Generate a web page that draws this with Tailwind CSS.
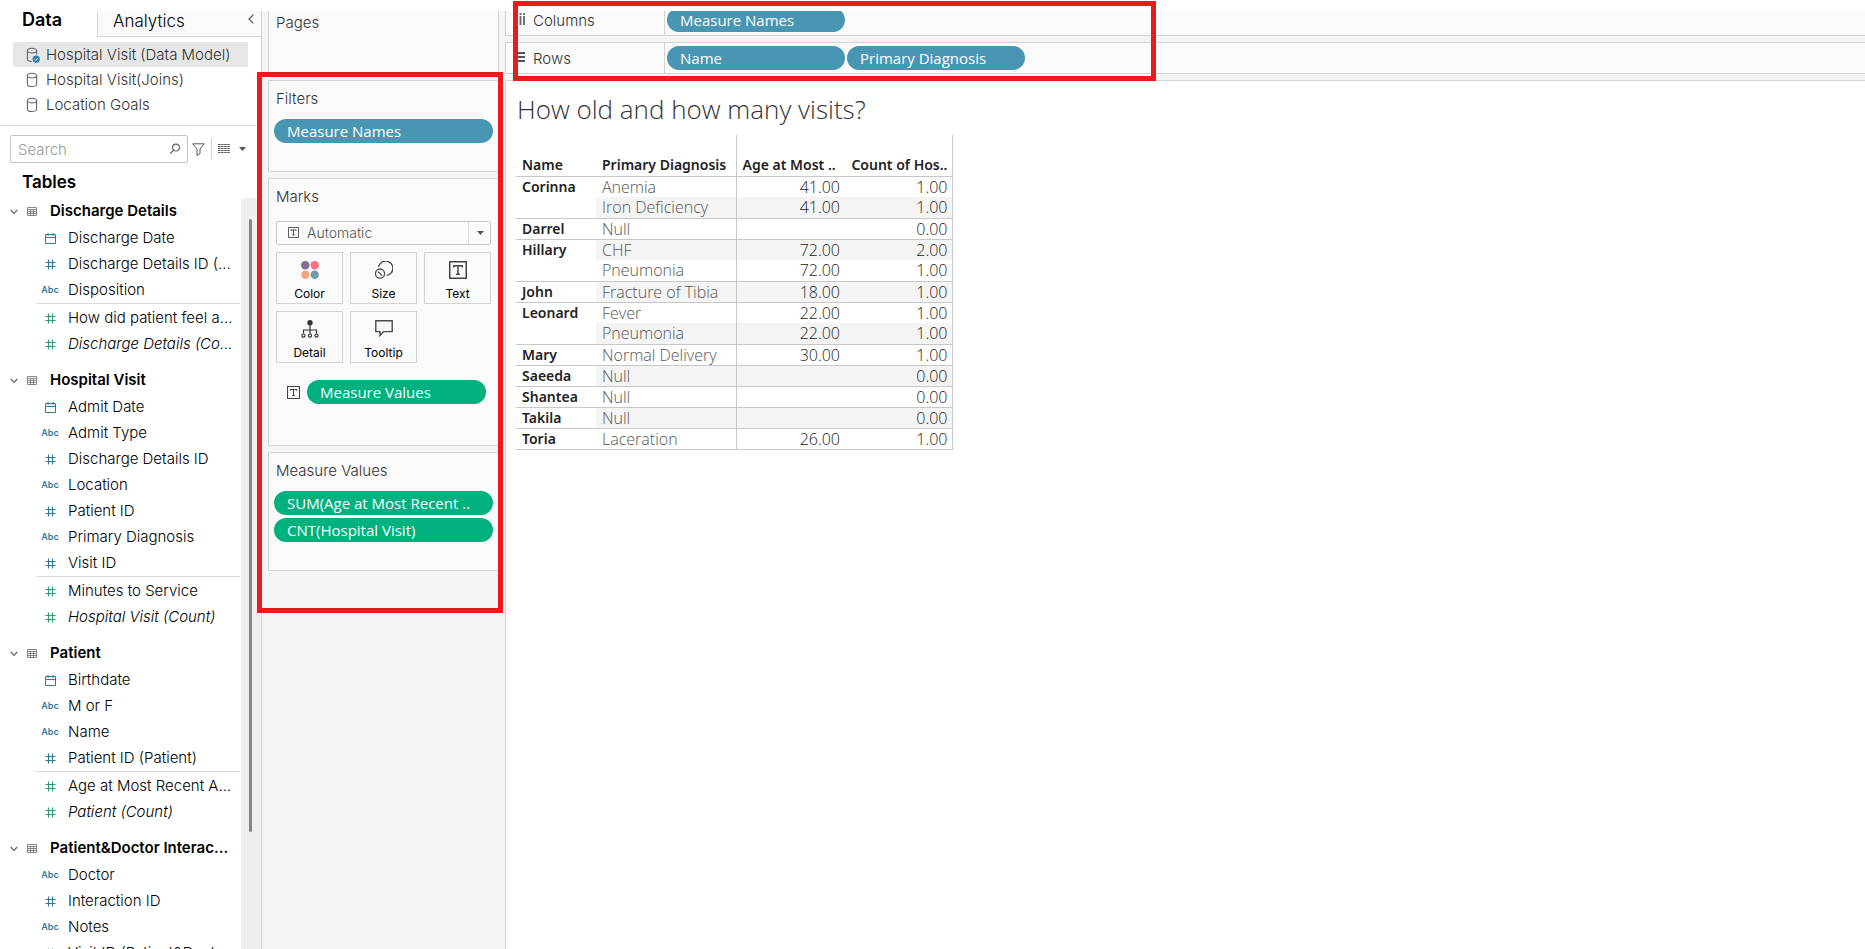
<!DOCTYPE html>
<html lang="en">
<head>
<meta charset="utf-8">
<title>Hospital Visit workbook</title>
<script src="https://cdn.jsdelivr.net/npm/@tailwindcss/browser@4"></script>
</head>
<body class="bg-white font-['Inter',sans-serif] text-[15px] font-light text-[#333]">

<svg class="hidden" aria-hidden="true">
  <symbol id="db" viewBox="0 0 14 16"><g fill="none" stroke="#666" stroke-width="1.1"><ellipse cx="6" cy="3.6" rx="4.6" ry="2.4"/><path d="M1.4 3.6v8.6c0 1.3 2 2.3 4.6 2.3s4.6-1 4.6-2.3V3.6"/></g></symbol>
  <symbol id="db-on" viewBox="0 0 14 16"><g fill="none" stroke="#666" stroke-width="1.1"><ellipse cx="6" cy="3.6" rx="4.6" ry="2.4"/><path d="M1.4 3.6v8.6c0 1.3 1.8 2.2 4.2 2.3M10.6 3.6v4"/></g><circle cx="10.2" cy="12.2" r="3.6" fill="#2e7da3"/><path d="M8.4 12.2l1.3 1.3 2.4-2.6" fill="none" stroke="#fff"/></symbol>
  <symbol id="chev" viewBox="0 0 8 8"><path d="M.8 2L4 5.4 7.2 2" fill="none" stroke="#666" stroke-width="1.3"/></symbol>
  <symbol id="table" viewBox="0 0 10 9"><path d="M.5.5h9v8h-9zM.5 2.5h9M.5 4.5h9M.5 6.5h9M3.5 2.5v6M6.5 2.5v6" fill="none" stroke="#6b6b6b" stroke-width=".8"/></symbol>
  <symbol id="cal" viewBox="0 0 11 11"><path d="M.5 1.5h10v9H.5zM.5 4.5h10M3 0v3M8 0v3" fill="none" stroke="currentColor"/></symbol>
  <symbol id="hash" viewBox="0 0 11 11"><path d="M3.5.5v10M7.5.5v10M.5 3.5h10M.5 7.5h10" fill="none" stroke="currentColor" stroke-width="1.1"/></symbol>
  <symbol id="tbox" viewBox="0 0 17 17"><path d="M.7.7h15.6v15.6H.7zM4.5 6.2V4.5h8v1.7M8.5 4.5v8M6.7 12.5h3.6" fill="none" stroke="#444" stroke-width="1.4"/></symbol>
</svg>

<div class="flex h-screen overflow-hidden pt-[11px]">

  <!-- Data pane -->
  <aside class="flex w-[262px] shrink-0 flex-col border-r border-[#d4d4d4]">
    <div class="flex h-[26px] shrink-0" role="tablist">
      <button role="tab" aria-selected="true" class="flex w-[97px] pl-[22px] text-lg font-semibold leading-[18px] text-black">Data</button>
      <div class="flex grow items-start justify-between border-b border-l border-[#d4d4d4] bg-[#fafafa]">
        <button role="tab" aria-selected="false" class="pl-[15px] text-[17px] font-light leading-5 text-black">Analytics</button>
        <button aria-label="Collapse pane" class="px-[7px] pt-[3px]"><svg class="h-[10px] w-[6px]" viewBox="0 0 6 10"><path d="M5.3.7L1 5l4.3 4.3" fill="none" stroke="#555" stroke-width="1.2"/></svg></button>
      </div>
    </div>

    <ul class="mt-[5px] mb-2 ml-[13px] mr-[13px] leading-[25px]">
      <li class="flex h-[25px] items-center gap-[6px] bg-[#e6e6e6] pl-[13px]"><svg class="h-4 w-[14px]"><use href="#db-on"/></svg>Hospital Visit (Data Model)</li>
      <li class="flex h-[25px] items-center gap-[6px] pl-[13px]"><svg class="h-4 w-[14px]"><use href="#db"/></svg>Hospital Visit(Joins)</li>
      <li class="flex h-[25px] items-center gap-[6px] pl-[13px]"><svg class="h-4 w-[14px]"><use href="#db"/></svg>Location Goals</li>
    </ul>

    <div class="flex h-[48px] shrink-0 items-center border-t border-[#dcdcdc] pb-px pl-[10px]">
      <label class="relative block w-[178px]">
        <input type="search" aria-label="Search fields" placeholder="Search" class="block h-7 w-full rounded-xs border border-[#c4c4c4] pl-[7px] font-light placeholder:text-[#999]">
        <svg class="absolute right-[7px] top-2 h-3 w-3" viewBox="0 0 12 12"><circle cx="7" cy="4.6" r="3.4" fill="none" stroke="#666" stroke-width="1.2"/><path d="M4.6 7L1.2 10.6" stroke="#666" stroke-width="1.2"/></svg>
      </label>
      <button aria-label="Filter fields" class="ml-[4px]"><svg class="h-[13px] w-[13px]" viewBox="0 0 13 13"><path d="M.7.8h11.6L8 6v4.6L5 12.4V6z" fill="none" stroke="#555"/></svg></button>
      <span class="mx-[6px] h-[22px] w-px bg-[#d4d4d4]"></span>
      <button aria-label="View as" class="flex items-center gap-[9px]"><svg class="h-[10px] w-[12px]" viewBox="0 0 12 10"><path d="M0 .5h12M0 2.5h12M0 4.5h12M0 6.500h12M0 8.500h12" stroke="#555" stroke-dasharray="2.500 .6"/></svg><svg class="h-1 w-[7px]" viewBox="0 0 7 4"><path d="M0 0h7L3.500 4z" fill="#555"/></svg></button>
    </div>

    <h2 class="h-[25px] shrink-0 pl-[22px] text-[17px] font-semibold leading-[18px] text-black">Tables</h2>

    <div class="flex min-h-0 grow">
      <div id="tree" class="w-[241px] shrink-0 overflow-hidden text-black"></div>
      <div class="grow bg-[#efefef] pl-2 pt-[21px]"><div class="h-[613px] w-[3px] rounded-full bg-[#858585]"></div></div>
    </div>
  </aside>

  <!-- Cards -->
  <section class="relative flex w-[243px] shrink-0 flex-col gap-[6px] bg-[#f4f4f4] pl-[6px] pr-[6px]">
    <div class="h-[63px] border border-t-0 border-[#d4d4d4] bg-[#fafafa] pl-[7px]"><h3 class="leading-[24px]">Pages</h3></div>
    <div class="h-[92px] border border-[#d4d4d4] bg-[#fafafa] px-[5px] pt-[7px]">
      <h3 class="pl-[2px] leading-[22px]">Filters</h3>
      <button class="mt-[9px] block h-6 w-full rounded-full bg-[#4996b2] pl-[13px] text-left font-['Open_Sans',sans-serif] font-medium text-white">Measure Names</button>
    </div>
    <div class="h-[268px] border border-[#d4d4d4] bg-[#fafafa] px-[7px] pt-[7px]">
      <h3 class="leading-[22px]">Marks</h3>
      <div class="relative mt-[13px]">
        <select aria-label="Mark type" class="block h-6 w-full appearance-none rounded-xs border border-[#c8c8c8] pb-[2px] pl-[30px] text-[14px] font-light text-[#555]"><option>Automatic</option></select>
        <svg class="pointer-events-none absolute left-[12px] top-[6px] h-[11px] w-[11px]" viewBox="0 0 17 17"><use href="#tbox"/></svg>
        <span class="pointer-events-none absolute right-0 top-px flex h-[22px] w-[23px] items-center justify-center border-l border-[#ddd]"><svg class="h-1 w-[7px]" viewBox="0 0 7 4"><path d="M0 0h7L3.500 4z" fill="#555"/></svg></span>
      </div>
      <div class="mt-[7px] grid grid-cols-3 gap-[7px] text-[12px] font-normal text-black">
        <button class="flex h-[52px] flex-col items-center border border-[#d4d4d4] pt-2"><svg class="h-[18px] w-[18px]" viewBox="0 0 18 18"><circle cx="4.300" cy="4.300" r="4.200" fill="#836c96"/><circle cx="13.700" cy="4.300" r="4.200" fill="#fb7183"/><circle cx="4.300" cy="13.700" r="4.200" fill="#f4a77c"/><circle cx="13.700" cy="13.700" r="4.200" fill="#6d9ba7"/></svg><span class="mt-[6px] leading-[18px]">Color</span></button>
        <button class="flex h-[52px] flex-col items-center border border-[#d4d4d4] pt-2"><svg class="h-[18px] w-[18px]" viewBox="0 0 18 18" fill="none" stroke="#4a4a4a" stroke-width="1.300"><circle cx="5" cy="12.600" r="4.600"/><path d="M3 10.600l4 4M3.600 6A7.200 7.200 0 1 1 11.800 14.400"/></svg><span class="mt-[6px] leading-[18px]">Size</span></button>
        <button class="flex h-[52px] flex-col items-center border border-[#d4d4d4] pt-2"><svg class="h-[18px] w-[18px]" viewBox="0 0 17 17"><use href="#tbox"/></svg><span class="mt-[6px] leading-[18px]">Text</span></button>
        <button class="flex h-[52px] flex-col items-center border border-[#d4d4d4] pt-2"><svg class="h-[18px] w-[18px]" viewBox="0 0 18 18" fill="none" stroke="#333" stroke-width="1.200"><circle cx="9" cy="2.800" r="2.700" fill="#333" stroke="none"/><path d="M9 5v8.500M2.500 13.500V10h13v3.500"/><circle cx="2.500" cy="15.600" r="1.600"/><circle cx="9" cy="15.600" r="1.600"/><circle cx="15.500" cy="15.600" r="1.600"/></svg><span class="mt-[6px] leading-[18px]">Detail</span></button>
        <button class="flex h-[52px] flex-col items-center border border-[#d4d4d4] pt-2"><svg class="h-[18px] w-[18px]" viewBox="0 0 18 18"><path d="M.8.800h16.400v10.800H8.500L5 15.400v-3.800H.8z" fill="none" stroke="#4a4a4a" stroke-width="1.400"/></svg><span class="mt-[6px] leading-[18px]">Tooltip</span></button>
      </div>
      <div class="mt-[17px] flex items-center gap-[7px] pl-[11px] pr-[5px]">
        <svg class="h-[13px] w-[13px]" viewBox="0 0 17 17"><use href="#tbox"/></svg>
        <button class="h-6 grow rounded-full bg-[#00b180] pl-[13px] text-left font-['Open_Sans',sans-serif] font-medium text-white">Measure Values</button>
      </div>
    </div>
    <div class="h-[119px] border border-[#d4d4d4] bg-[#fafafa] px-[5px] pt-[7px]">
      <h3 class="pl-[2px] leading-[22px]">Measure Values</h3>
      <div class="mt-[9px] flex flex-col gap-[3px] text-white">
        <button class="h-6 rounded-full bg-[#00b180] pl-[13px] text-left font-['Open_Sans',sans-serif] font-medium">SUM(Age at Most Recent ..</button>
        <button class="h-6 rounded-full bg-[#00b180] pl-[13px] text-left font-['Open_Sans',sans-serif] font-medium">CNT(Hospital Visit)</button>
      </div>
    </div>
    <div class="pointer-events-none absolute -left-[5px] right-[2px] top-[61px] h-[541px] border-[5px] border-[#e81c1c]"></div>
  </section>

  <!-- Shelves and view -->
  <main class="relative flex min-w-0 grow flex-col gap-[6px] bg-[#f4f4f4]">
    <div class="flex h-[25px] shrink-0 items-end overflow-hidden border-b border-l border-[#d4d4d4] bg-[#fafafa]">
      <div class="flex h-full w-[159px] shrink-0 items-center gap-2 border-r border-[#d4d4d4] pl-[10px]"><svg class="mb-2 h-[12px] w-[9px]" viewBox="0 0 9 12"><path d="M1 0v2M1 3v9M4.500 0v2M4.500 3v9M8 0v2M8 3v9" stroke="#666" stroke-width="1.800"/></svg><span class="mb-1">Columns</span></div>
      <button class="mb-[3px] ml-[2px] h-6 w-[178px] shrink-0 rounded-full bg-[#4996b2] pl-[13px] text-left font-['Open_Sans',sans-serif] font-medium text-white">Measure Names</button>
    </div>
    <div class="flex h-[32px] shrink-0 items-center border border-r-0 border-[#d4d4d4] bg-[#fafafa]">
      <div class="flex h-full w-[159px] shrink-0 items-center gap-2 border-r border-[#d4d4d4] pl-[10px] pt-[2px]"><svg class="mb-1 h-[10px] w-[9px]" viewBox="0 0 9 10"><path d="M0 1h9M0 5h9M0 9h9" stroke="#555" stroke-width="2"/></svg>Rows</div>
      <button class="ml-[2px] h-6 w-[178px] shrink-0 rounded-full bg-[#4996b2] pl-[13px] text-left font-['Open_Sans',sans-serif] font-medium text-white">Name</button>
      <button class="ml-[2px] h-6 w-[178px] shrink-0 rounded-full bg-[#4996b2] pl-[13px] text-left font-['Open_Sans',sans-serif] font-medium text-white">Primary Diagnosis</button>
    </div>
    <div class="grow border-l border-t border-[#d4d4d4] bg-white pl-[10px] font-['Open_Sans',sans-serif]">
      <h1 class="pl-px pt-[11px] text-[26px] leading-[34px]">How old and how many visits?</h1>
      <table class="mt-[9px] w-[436px] table-fixed border-collapse">
        <colgroup><col class="w-[80px]"><col class="w-[140px]"><col class="w-[108px]"><col class="w-[108px]"></colgroup>
        <thead>
          <tr class="h-[41px] whitespace-nowrap border-b border-[#c8c8c8] text-left align-bottom font-['Noto_Sans',sans-serif] text-sm leading-[22px] text-[#222]">
            <th class="pl-[6px] font-semibold">Name</th><th class="pl-[6px] font-semibold">Primary Diagnosis</th><th class="border-l border-[#c8c8c8] pl-[6px] font-semibold">Age at Most ..</th><th class="border-r border-[#c8c8c8] pr-1 text-right font-semibold">Count of Hos..</th>
          </tr>
        </thead>
        <tbody id="rows"></tbody>
      </table>
    </div>
    <div class="pointer-events-none absolute -top-[10px] left-2 h-[80px] w-[643px] border-[5px] border-[#e81c1c]"></div>
  </main>
</div>

<script>
// Field kinds: d date, n number, s string (dimensions); m measure, c generated count
const tables = [
  ['Discharge Details', [['d','Discharge Date'],['n','Discharge Details ID (...'],['s','Disposition']], [['m','How did patient feel a...'],['c','Discharge Details (Co...']]],
  ['Hospital Visit', [['d','Admit Date'],['s','Admit Type'],['n','Discharge Details ID'],['s','Location'],['n','Patient ID'],['s','Primary Diagnosis'],['n','Visit ID']], [['m','Minutes to Service'],['c','Hospital Visit (Count)']]],
  ['Patient', [['d','Birthdate'],['s','M or F'],['s','Name'],['n','Patient ID (Patient)']], [['m','Age at Most Recent A...'],['c','Patient (Count)']]],
  ['Patient&amp;Doctor Interac...', [['s','Doctor'],['n','Interaction ID'],['s','Notes'],['n','Visit ID (Patient&amp;Doct...']], []],
];
const icon = {
  d: '<svg class="h-[11px] w-[11px] text-[#2f7a99]"><use href="#cal"/></svg>',
  n: '<svg class="h-[11px] w-[11px] text-[#2f7a99]"><use href="#hash"/></svg>',
  s: '<span class="text-[9px] font-semibold text-[#2f7a99]">Abc</span>',
  m: '<svg class="h-[11px] w-[11px] text-[#2f9f78]"><use href="#hash"/></svg>',
};
icon.c = icon.m;
const field = ([k, name]) => `<li class="flex h-[26px] items-center whitespace-nowrap"><span class="flex w-5 justify-center">${icon[k]}</span><span class="pl-2 ${k === 'c' ? 'italic' : ''}">${name}</span></li>`;
document.getElementById('tree').innerHTML = tables.map(([name, dims, meas]) => `
  <div class="mb-[10px]">
    <h3 class="flex h-[27px] items-center whitespace-nowrap pl-[10px] font-semibold"><svg class="h-2 w-2"><use href="#chev"/></svg><svg class="ml-[9px] mr-[13px] h-[9px] w-[10px]"><use href="#table"/></svg>${name}</h3>
    <ul class="pl-[40px]">${dims.map(field).join('')}</ul>
    ${meas.length ? `<hr class="mb-px ml-9 mr-px border-[#dcdcdc]"><ul class="pl-[40px]">${meas.map(field).join('')}</ul>` : ''}
  </div>`).join('');

const data = [
  ['Corinna', [['Anemia','41.00','1.00'],['Iron Deficiency','41.00','1.00']]],
  ['Darrel', [['Null','','0.00']]],
  ['Hillary', [['CHF','72.00','2.00'],['Pneumonia','72.00','1.00']]],
  ['John', [['Fracture of Tibia','18.00','1.00']]],
  ['Leonard', [['Fever','22.00','1.00'],['Pneumonia','22.00','1.00']]],
  ['Mary', [['Normal Delivery','30.00','1.00']]],
  ['Saeeda', [['Null','','0.00']]],
  ['Shantea', [['Null','','0.00']]],
  ['Takila', [['Null','','0.00']]],
  ['Toria', [['Laceration','26.00','1.00']]],
];
let n = 0;
document.getElementById('rows').innerHTML = data.map(([name, rows]) => rows.map((r, i) => {
  const bg = n++ % 2 ? 'bg-[#f4f4f4]' : '';
  const end = i === rows.length - 1 ? 'border-b border-[#c8c8c8]' : '';
  return `<tr class="h-[21px] text-base leading-5 ${end}">${i ? '' : `<th rowspan="${rows.length}" class="pl-[6px] text-left align-top font-['Noto_Sans',sans-serif] text-sm leading-5 font-semibold text-[#222]">${name}</th>`}<td class="whitespace-nowrap pl-[6px] text-[#555] ${bg}">${r[0]}</td><td class="border-l border-[#c8c8c8] pr-1 text-right text-[#222] ${bg}">${r[1]}</td><td class="border-r border-[#c8c8c8] pr-1 text-right text-[#222] ${bg}">${r[2]}</td></tr>`;
}).join('')).join('');
</script>
</body>
</html>
